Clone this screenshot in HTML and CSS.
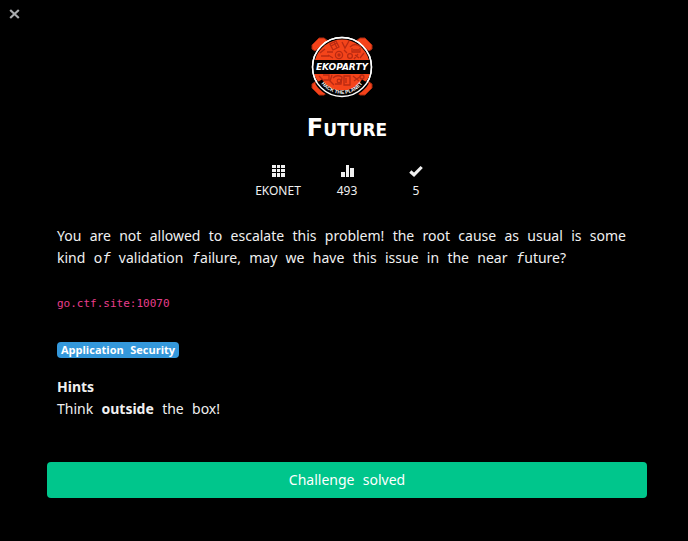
FILE: index.html
```html
<!DOCTYPE html>
<html lang="en">
<head>
<meta charset="utf-8">
<title>Future</title>
<link rel="stylesheet" href="styles.css">
</head>
<body>
<button class="close" type="button" aria-label="Close">
  <svg width="11" height="10" viewBox="0 0 11 10"><path d="M1.2 1 L9.8 9 M9.8 1 L1.2 9" stroke="#a9abae" stroke-width="2.2"/></svg>
</button>
<main class="challenge">
  <header class="head">
    <svg class="logo" width="64" height="62" viewBox="0 0 64 62" role="img" aria-label="Ekoparty">
      <g fill="#f4421a" stroke="#a82a10" stroke-width="1">
        <path d="M2 9 L9 2 H14 L18 5 L5 15 L2 13Z"/>
        <path d="M62 9 L55 2 H50 L46 5 L59 15 L62 13Z"/>
        <path d="M2 52 L9 59 H14 L18 56 L5 46 L2 48Z"/>
        <path d="M62 52 L55 59 H50 L46 56 L59 46 L62 48Z"/>
      </g>
      <circle cx="32" cy="31" r="29.5" fill="#000" stroke="#fff" stroke-width="1.4"/>
      <path d="M5 24 A28 28 0 0 1 59 24Z" fill="#f4441a"/>
      <path d="M4 38 H60 Q58 44 54 47 Q32 62 10 47 Q6 44 4 38Z" fill="#f4441a"/>
      <g fill="none" stroke="#b92a12" stroke-width="1.3">
        <path d="M20 8 l6 -3 3 6 -6 3z M21 10 l6 -3 M24 6 l3 6 M32 6 l3 6 4 -7 M40 11 q5 -5 11 0 M42 12 v4 h8 v-4 M43 14 h6 M10 17 l5 -4 M11 20 h8 M54 17 l-4 5"/>
        <circle cx="29" cy="19" r="3.6"/><circle cx="29" cy="19" r="1"/>
        <circle cx="40" cy="20" r="2.4"/>
        <path d="M17 16 h6 M18 19 l5 3 M34 14 l3 3 M45 19 l4 3 M48 18 l-4 5"/>
        <path d="M9 40 l5 5 M13 39 h6 v5 h-5 M22 39 l-2 6 4 4 M23 42 q4 -4 9 -1 l-1 7 h-6 M34 40 h6 v9 h-6z M36 42 v5 M43 40 l6 5 M44 45 l7 -5"/>
        <circle cx="29" cy="45" r="1.8"/><circle cx="52" cy="41" r="2"/>
      </g>
      <path d="M8.500 45.500 A27.500 27.500 0 0 0 55.500 45.500" fill="none" stroke="#000" stroke-width="8"/>
      <path id="motto-line" d="M9 44 A26 26 0 0 0 55 44" fill="none"/>
      <text class="motto"><textPath href="#motto-line" startOffset="50%">HACK THE PLANET</textPath></text>
      <text class="brand" x="32" y="34">EKOPARTY</text>
      <circle cx="32" cy="31" r="29.500" fill="none" stroke="#fff" stroke-width="1.4"/>
    </svg>
    <h1 class="title">Future</h1>
    <ul class="stats">
      <li>
        <svg width="13" height="14" viewBox="0 0 13 14" fill="#f0f0f0"><path d="M0 1h4v3H0z M5 1h3v3H5z M9 1h4v3H9z M0 5h4v3H0z M5 5h3v3H5z M9 5h4v3H9z M0 9h4v4H0z M5 9h3v4H5z M9 9h4v4H9z"/></svg>
        <span>EKONET</span>
      </li>
      <li>
        <svg width="13" height="14" viewBox="0 0 13 14" fill="#f0f0f0"><path d="M0 8h4v5H0z M5 1h3v12H5z M9 4h4v9H9z"/></svg>
        <span>493</span>
      </li>
      <li>
        <svg width="14" height="14" viewBox="0 0 14 14"><path d="M1.300 7.500 L5 10.800 L12.700 3" fill="none" stroke="#f0f0f0" stroke-width="3.200"/></svg>
        <span>5</span>
      </li>
    </ul>
  </header>
  <section class="body">
    <p>You&emsp13; are&emsp13; not&emsp13; allowed&emsp13; to&emsp13; escalate&emsp13; this&emsp13; problem!&emsp13; the&emsp13; root&emsp13; cause&emsp13; as&emsp13; usual&emsp13; is&emsp13; some&emsp13; kind&emsp13; o<i>f</i>&emsp13; validation&emsp13; <i>f</i>ailure,&emsp13; may&emsp13; we&emsp13; have&emsp13; this&emsp13; issue&emsp13; in&emsp13; the&emsp13; near&emsp13; <i>f</i>uture?</p>
    <code class="host">go.ctf.site:10070</code>
    <span class="tag">Application&emsp13; Security</span>
    <div class="hints">
      <h2>Hints</h2>
      <p>Think&emsp13; <strong>outside</strong>&emsp13; the&emsp13; box!</p>
    </div>
  </section>
  <button class="solved" type="button">Challenge&emsp13; solved</button>
</main>
</body>
</html>
```
FILE: styles.css
```css
* { box-sizing: border-box; }
body {
  margin: 0;
  min-height: 100vh;
  background: #000;
  color: #f0f0f0;
  font: 14px/22px "Noto Sans", "Open Sans", sans-serif;
}
h1, h2, p, ul { margin: 0; padding: 0; }
.close {
  position: absolute;
  top: 9px;
  left: 9px;
  padding: 0;
  border: 0;
  background: none;
  line-height: 0;
}
.challenge { padding: 36px 41px 43px 47px; }
.head {
  display: flex;
  flex-direction: column;
  align-items: center;
}
.logo { margin-right: 10px; }
.brand {
  fill: #fff;
  font: italic bold 9px "DejaVu Sans", sans-serif;
  text-anchor: middle;
}
.motto {
  fill: #fff;
  font: bold 5px "Liberation Sans", sans-serif;
  text-anchor: middle;
}
.title {
  margin-top: 18px;
  color: #fff;
  font: bold 24px/24px "DejaVu Sans", sans-serif;
  font-variant: small-caps;
}
.stats {
  display: grid;
  grid-template-columns: repeat(3, 69px);
  margin-top: 24px;
  list-style: none;
  font-size: 12px;
  line-height: 18px;
}
.stats li {
  display: flex;
  flex-direction: column;
  align-items: center;
  gap: 4px;
}
.body {
  display: flex;
  flex-direction: column;
  align-items: flex-start;
  padding: 25px 10px 0;
}
.body i { font-family: "DejaVu Sans Mono", monospace; line-height: 1; }
.host {
  margin-top: 25px;
  color: #e83e8c;
  font: 11px/20px "DejaVu Sans Mono", monospace;
}
.tag {
  margin-top: 28px;
  padding: 0 4px;
  border-radius: 4px;
  background: #3498db;
  color: #fff;
  font: bold 11px/16px "Open Sans", "Noto Sans", sans-serif;
}
.hints { margin-top: 18px; }
.hints h2 { font-size: 14px; line-height: 22px; }
.solved {
  display: block;
  width: 100%;
  height: 36px;
  margin-top: 42px;
  padding: 0;
  border: 0;
  border-radius: 4px;
  background: #00c68c;
  color: #fff;
  font: inherit;
}
```
